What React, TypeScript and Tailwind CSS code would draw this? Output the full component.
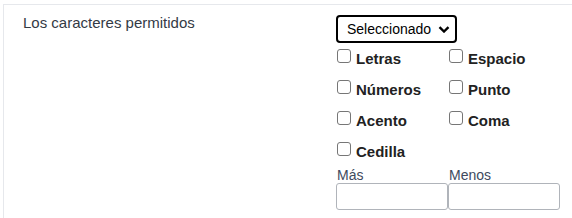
import React, { useState } from 'react';

const opciones = [
  ['Letras', 'Espacio'],
  ['Números', 'Punto'],
  ['Acento', 'Coma'],
  ['Cedilla', ''],
];

const App = () => {
  const [checked, setChecked] = useState<Record<string, boolean>>({});

  const toggle = (name: string) => {
    setChecked({ ...checked, [name]: !checked[name] });
  };

  return (
    <div className="w-[572px] h-[218px] bg-white overflow-hidden font-['Liberation_Sans',Arial,sans-serif]">
      <div className="ml-[3px] mt-[4px] border-t border-l border-[#e6e8ec] h-[214px] flex">
        {/* celda izquierda */}
        <div className="w-[332px] pl-[19px] pt-[8px] text-[15px] leading-[20px] text-[#333a45]">
          Los caracteres permitidos
        </div>

        {/* celda derecha */}
        <div className="flex flex-col">
          <div className="mt-[10px] relative w-[121px] h-[28px] border-2 border-black rounded-[4px] flex items-center pl-[9px] text-[14px] text-black">
            Seleccionado
            <svg className="absolute right-[5px] top-[9px]" width="12" height="7" viewBox="0 0 12 7">
              <path d="M1.5 1.2 L6 5.5 L10.5 1.2" fill="none" stroke="black" strokeWidth="2.4" />
            </svg>
          </div>

          <div className="flex flex-col">
            {opciones.map((fila, i) => (
              <div key={i} className="h-[31px] flex pt-[2px]">
                {fila.map((op) =>
                  op ? (
                    <label key={op} className="w-[112px] flex items-center gap-[5px] text-[15px] font-bold text-[#222]">
                      <input
                        type="checkbox"
                        className="appearance-none relative -top-[4px] ml-[1px] w-[14px] h-[14px] border border-[#767676] rounded-[3px] bg-white checked:bg-[#0075ff] checked:border-[#0075ff]"
                        checked={!!checked[op]}
                        onChange={() => toggle(op)}
                      />
                      {op}
                    </label>
                  ) : (
                    <div key="vacio" className="w-[112px]" />
                  )
                )}
              </div>
            ))}
          </div>

          <div className="flex">
            <div className="w-[112px] flex flex-col">
              <span className="text-[14px] leading-[16px] pl-[1px] text-[#404a5e]">Más</span>
              <input type="text" className="w-[112px] h-[27px] border border-[#b0b4ba] rounded-[3px]" />
            </div>
            <div className="w-[112px] flex flex-col">
              <span className="text-[14px] leading-[16px] pl-[1px] text-[#404a5e]">Menos</span>
              <input type="text" className="w-[112px] h-[27px] border border-[#b0b4ba] rounded-[3px]" />
            </div>
          </div>
        </div>
      </div>
    </div>
  );
};

export default App;
